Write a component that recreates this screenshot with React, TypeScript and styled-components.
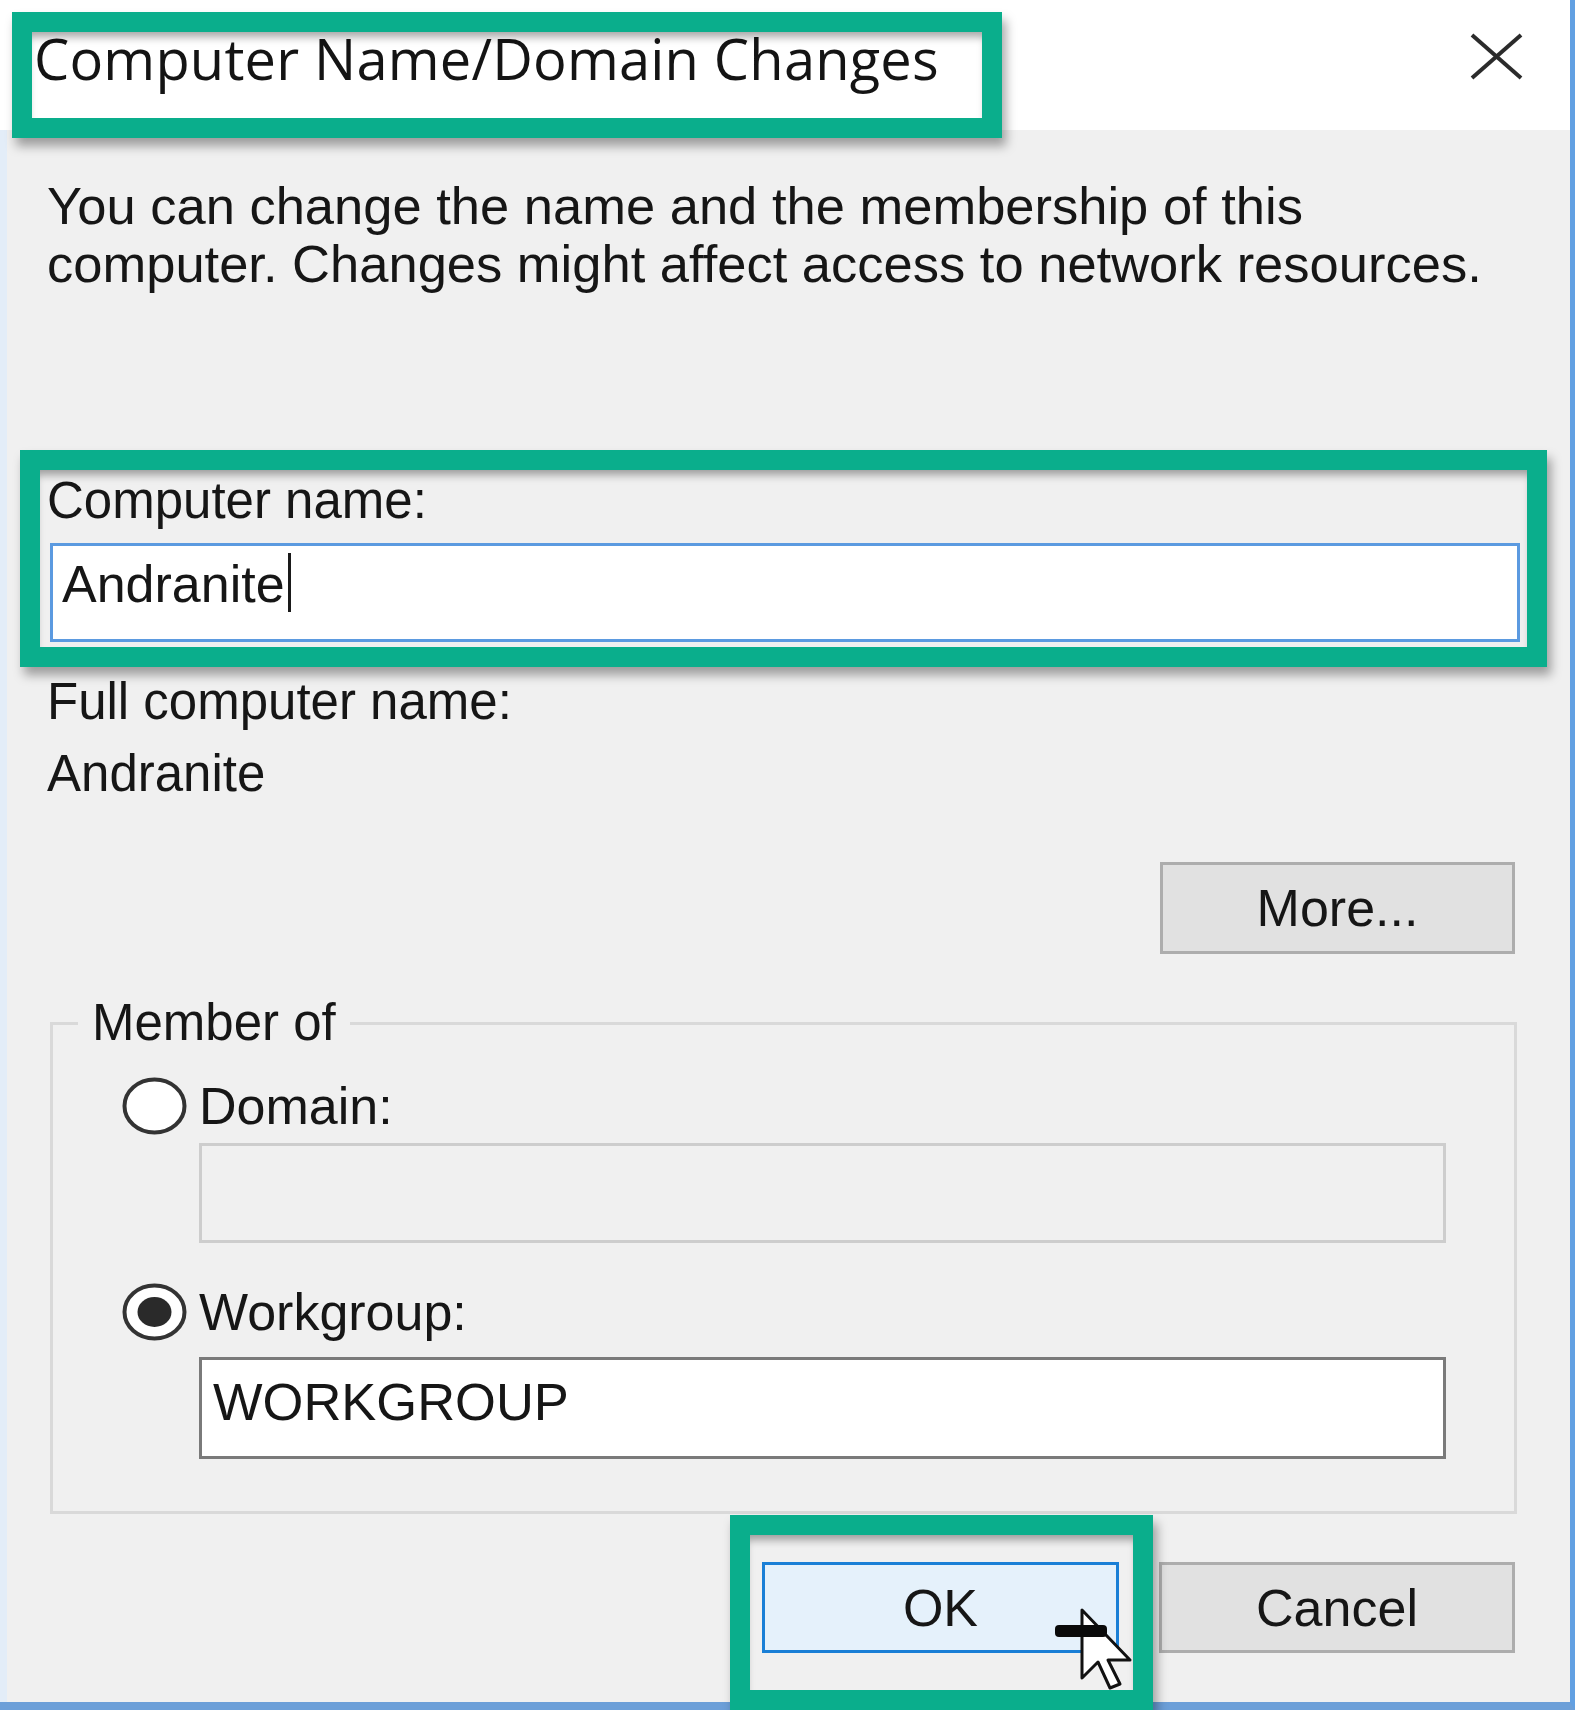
import React from 'react';
import styled, { createGlobalStyle } from 'styled-components';

const GlobalStyle = createGlobalStyle`
  html, body { margin: 0; padding: 0; background: #f0f0f0; }
  body { width: 1575px; height: 1710px; overflow: hidden; }
  *, *::before, *::after { box-sizing: border-box; }
`;

const TEAL = '#0aae8c';

const Window = styled.div`
  position: relative;
  width: 1575px;
  height: 1710px;
  display: flex;
  flex-direction: column;
  background: #f0f0f0;
  border-right: 5px solid #62a0e2;
  border-bottom: 8px solid #6c9fd8;
  font-family: "Liberation Sans", Arial, sans-serif;
  color: #161616;
`;

const TitleBar = styled.div`
  height: 130px;
  flex: none;
  background: #ffffff;
  display: flex;
  justify-content: space-between;
  align-items: flex-start;
  padding: 20px 47px 0 34px;
`;

const Title = styled.div`
  font-family: "Open Sans", "Noto Sans", sans-serif;
  font-size: 56px;
  line-height: normal;
  color: #141414;
  letter-spacing: 0.2px;
`;

const CloseIcon = styled.svg`
  margin-top: 13px;
  display: block;
`;

const Body = styled.div`
  flex: 1;
  display: flex;
  flex-direction: column;
  align-items: flex-start;
  border-left: 7px solid #e3edf8;
  padding: 47px 55px 0 40px;
`;

const Description = styled.p`
  margin: 0;
  max-width: 1460px;
  font-size: 52.5px;
  line-height: 58px;
`;

const Label = styled.div<{ $gap: number }>`
  margin-top: ${(p) => p.$gap}px;
  font-size: 51px;
  line-height: 58px;
  white-space: nowrap;
`;

const TextBox = styled.div<{ $tone: 'focus' | 'normal' | 'disabled' }>`
  height: ${(p) => (p.$tone === 'focus' ? 99 : p.$tone === 'disabled' ? 100 : 102)}px;
  border: 3px solid
    ${(p) => (p.$tone === 'focus' ? '#5b9ae0' : p.$tone === 'disabled' ? '#cdcdcd' : '#7a7a7a')};
  background: ${(p) => (p.$tone === 'disabled' ? '#f0f0f0' : '#ffffff')};
  font-size: 52.5px;
  line-height: 58px;
  white-space: nowrap;
`;

const NameBox = styled(TextBox)`
  width: 1470px;
  margin: 13px 0 0 3px;
  padding: 9px 0 0 9px;
  font-size: 52px;
`;

const Caret = styled.span`
  display: inline-block;
  width: 3px;
  height: 59px;
  margin: -2px 0 0 3px;
  vertical-align: top;
  background: #1a1a1a;
`;

const ButtonRow = styled.div<{ $gap: number }>`
  align-self: stretch;
  display: flex;
  justify-content: flex-end;
  gap: 40px;
  margin-top: ${(p) => p.$gap}px;
`;

const Button = styled.div<{ $primary?: boolean; $w: number; $h: number }>`
  width: ${(p) => p.$w}px;
  height: ${(p) => p.$h}px;
  display: flex;
  align-items: center;
  justify-content: center;
  border: 3px solid ${(p) => (p.$primary ? '#1a7fd6' : '#adadad')};
  background: ${(p) => (p.$primary ? '#e5f1fb' : '#e1e1e1')};
  font-size: 52px;
  line-height: 58px;
`;

const Group = styled.fieldset`
  width: 1467px;
  margin: 40px 0 0 3px;
  padding: 0 68px 52px 25px;
  border: 3px solid #d9d9d9;
  min-width: 0;
`;

const Legend = styled.legend`
  padding: 0 14px;
  font-size: 51px;
  line-height: 58px;
`;

const RadioRow = styled.div<{ $gap: number }>`
  display: flex;
  align-items: center;
  gap: 12px;
  height: 58px;
  margin: ${(p) => p.$gap}px 0 0 44px;
  font-size: 52px;
  line-height: 58px;
`;

const GroupBox = styled(TextBox)<{ $gap: number }>`
  width: 1247px;
  margin: ${(p) => p.$gap}px 0 0 121px;
  padding: 13px 0 0 11px;
`;

const Highlight = styled.div<{ $x: number; $y: number; $w: number; $h: number }>`
  position: absolute;
  left: ${(p) => p.$x}px;
  top: ${(p) => p.$y}px;
  width: ${(p) => p.$w}px;
  height: ${(p) => p.$h}px;
  border: 20px solid ${TEAL};
  box-shadow: 4px 8px 10px rgba(0, 0, 0, 0.35), inset 0 9px 9px -4px rgba(0, 0, 0, 0.35);
  pointer-events: none;
  z-index: 2;
`;

const Cursor = styled.svg`
  position: absolute;
  left: 1050px;
  top: 1605px;
  z-index: 1;
`;

function Radio({ checked }: { checked?: boolean }) {
  return (
    <svg width="65" height="58" viewBox="0 0 65 58">
      <ellipse cx="32.5" cy="29" rx="30" ry="26.5" fill="#ffffff" stroke="#333333" strokeWidth="4" />
      {checked && <ellipse cx="32.5" cy="29" rx="17" ry="15" fill="#2a2a2a" />}
    </svg>
  );
}

export default function App() {
  return (
    <>
      <GlobalStyle />
      <Window>
        <TitleBar>
          <Title>Computer Name/Domain Changes</Title>
          <CloseIcon width="53" height="47" viewBox="0 0 53 47">
            <line x1="2" y1="2" x2="51" y2="45" stroke="#2b2b2b" strokeWidth="4" />
            <line x1="51" y1="2" x2="2" y2="45" stroke="#2b2b2b" strokeWidth="4" />
          </CloseIcon>
        </TitleBar>
        <Body>
          <Description>
            You can change the name and the membership of this computer. Changes might affect access to network
            resources.
          </Description>
          <Label $gap={179}>Computer name:</Label>
          <NameBox $tone="focus">
            Andranite
            <Caret />
          </NameBox>
          <Label $gap={31}>Full computer name:</Label>
          <Label $gap={14}>Andranite</Label>
          <ButtonRow $gap={59}>
            <Button $w={355} $h={92}>More...</Button>
          </ButtonRow>
          <Group>
            <Legend>Member of</Legend>
            <RadioRow $gap={25}>
              <Radio />
              <span>Domain:</span>
            </RadioRow>
            <GroupBox $tone="disabled" $gap={8} />
            <RadioRow $gap={40}>
              <Radio checked />
              <span>Workgroup:</span>
            </RadioRow>
            <GroupBox $tone="normal" $gap={16}>
              WORKGROUP
            </GroupBox>
          </Group>
          <ButtonRow $gap={48}>
            <Button $primary $w={357} $h={91}>OK</Button>
            <Button $w={356} $h={91}>Cancel</Button>
          </ButtonRow>
        </Body>

        <Cursor width="90" height="95" viewBox="0 0 90 95">
          <polygon
            points="32,5 32,73 48,57 60,83 70,79 58,55 80,55"
            fill="#ffffff"
            stroke="#111111"
            strokeWidth="3"
            strokeLinejoin="round"
          />
          <rect x="5" y="20" width="52" height="12" rx="4" fill="#0a0a0a" />
        </Cursor>

        <Highlight $x={12} $y={12} $w={990} $h={126} />
        <Highlight $x={20} $y={450} $w={1527} $h={217} />
        <Highlight $x={730} $y={1515} $w={423} $h={195} />
      </Window>
    </>
  );
}
